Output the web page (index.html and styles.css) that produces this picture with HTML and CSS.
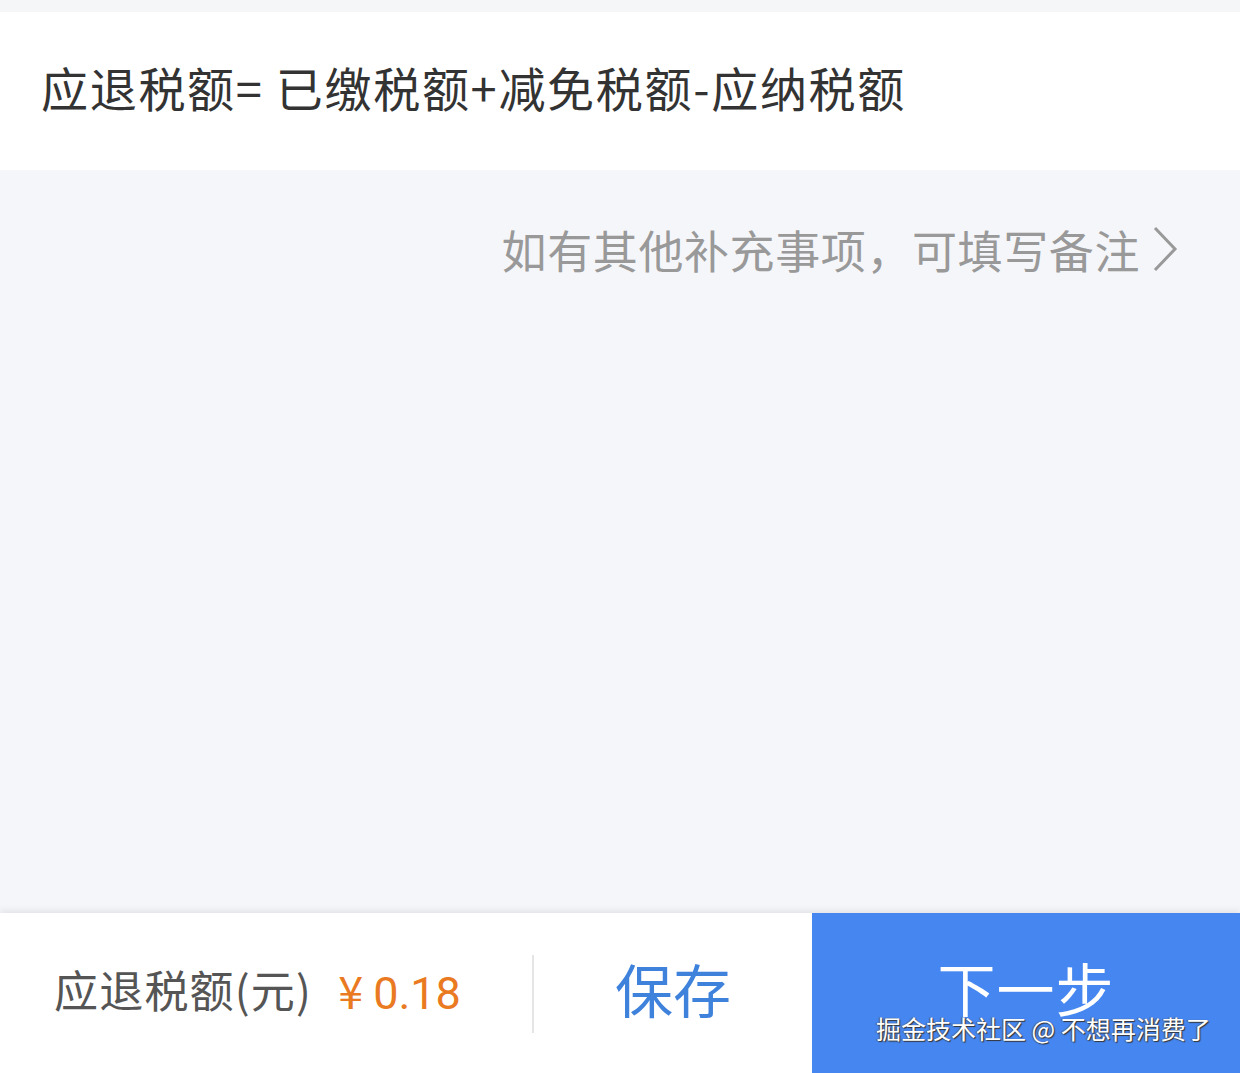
FILE: index.html
```html
<!DOCTYPE html>
<html lang="zh">
<head>
<meta charset="utf-8">
<link rel="stylesheet" href="styles.css">
</head>
<body>
<div class="page">
  <div class="topstrip"></div>
  <section class="formula">应退税额= 已缴税额+减免税额-应纳税额</section>
  <main class="content">
    <div class="note">
      <span class="note-text">如有其他补充事项，可填写备注</span>
      <svg class="chev" width="26" height="46" viewBox="0 0 26 46"><path d="M3 2 L23 23 L3 44" fill="none" stroke="#999" stroke-width="3"/></svg>
    </div>
  </main>
  <footer class="bar">
    <div class="amount">
      <span class="amount-label">应退税额(元)</span>
      <span class="amount-value"><span class="yen">¥</span>0.18</span>
    </div>
    <div class="divider"></div>
    <div class="save">保存</div>
    <div class="next">
      <span class="next-text">下一步</span>
      <span class="watermark">掘金技术社区 @ 不想再消费了</span>
    </div>
  </footer>
</div>
</body>
</html>
```
FILE: styles.css
```css
html, body { margin: 0; padding: 0; }
body {
  font-family: "Noto Sans CJK SC", "Noto Sans", sans-serif;
  background: #f5f6fa;
}
.page {
  width: 1240px;
  height: 1073px;
  display: flex;
  flex-direction: column;
  overflow: hidden;
}
.topstrip { height: 12px; background: #f5f6f8; flex: none; }
.formula {
  height: 158px;
  flex: none;
  background: #fff;
  display: flex;
  align-items: center;
  padding-left: 41px;
  font-size: 47px;
  color: #333;
  letter-spacing: 1.7px;
  box-sizing: border-box;
  padding-bottom: 10px;
}
.content {
  flex: 1;
  background: #f5f6fa;
}
.note {
  display: flex;
  justify-content: flex-end;
  align-items: center;
  padding-top: 50px;
  padding-right: 62px;
  gap: 12px;
}
.note-text { font-size: 45px; color: #999; line-height: 60px; letter-spacing: 0.6px; }
.chev { flex: none; margin-top: -2px; }
.bar {
  height: 160px;
  flex: none;
  background: #fff;
  display: flex;
  align-items: stretch;
  box-shadow: 0 -3px 6px rgba(0,0,0,0.07);
  position: relative;
}
.amount {
  width: 532px;
  display: flex;
  align-items: center;
  padding-left: 54px;
  box-sizing: border-box;
  padding-bottom: 8px;
}
.amount-label { font-size: 44px; color: #555; letter-spacing: 1.2px; }
.amount-value {
  font-size: 45px;
  color: #ea7a22;
  margin-left: 26px;
  font-family: "Roboto", "Noto Sans CJK SC", sans-serif;
}
.yen { margin-right: 10px; font-family: "Noto Sans CJK SC", sans-serif; }
.divider {
  width: 2px;
  background: #e5e5e5;
  margin: 42px 0 40px;
}
.save {
  width: 278px;
  display: flex;
  align-items: center;
  justify-content: center;
  font-size: 58px;
  color: #3f82dc;
  padding-bottom: 10px;
}
.next {
  flex: 1;
  background: #4586f0;
  position: relative;
  display: flex;
  align-items: center;
  justify-content: center;
}
.next-text {
  font-size: 58px;
  color: #fff;
  margin-left: 0;
  margin-bottom: 12px;
  letter-spacing: 1px;
}
.watermark {
  position: absolute;
  left: 64px;
  top: 97px;
  font-size: 25px;
  color: #fff;
  text-shadow: 1px 1px 1px #333, -1px 0 1px #555;
  white-space: nowrap;
  letter-spacing: 0;
}
```
